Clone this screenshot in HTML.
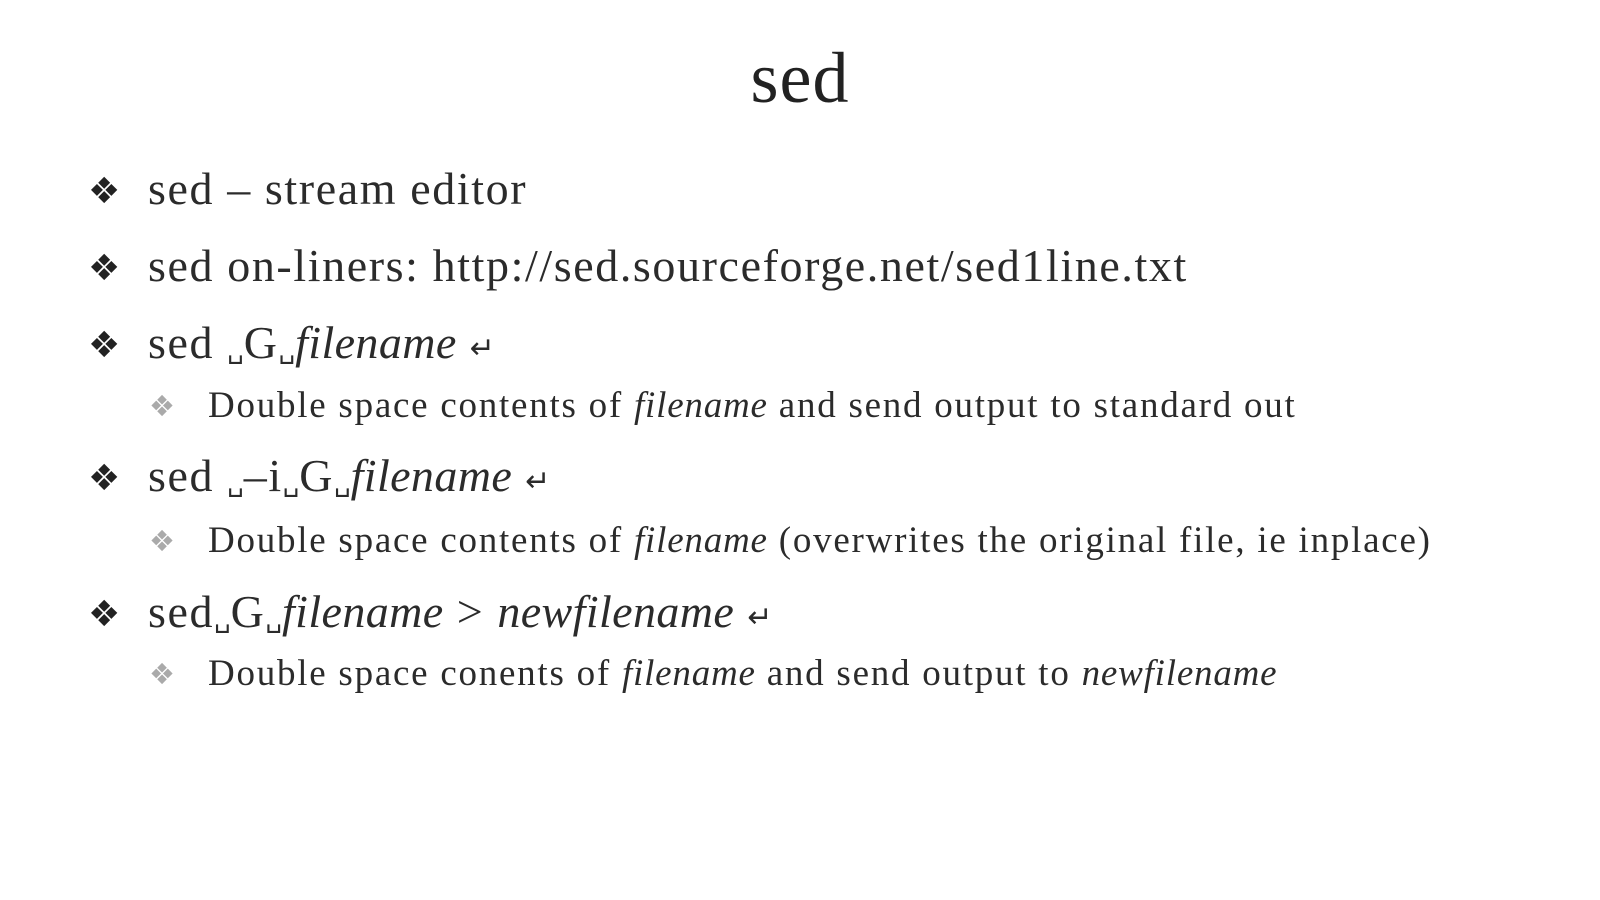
<!DOCTYPE html>
<html><head><meta charset="utf-8"><style>
html,body{margin:0;padding:0;width:1600px;height:900px;background:#fff;overflow:hidden}
body{font-family:"Liberation Serif",serif;color:#2b2b2b;position:relative}
.t{position:absolute;white-space:nowrap;line-height:1}
.title{font-size:72px;left:0;width:1600px;text-align:center;top:42px;color:#222;letter-spacing:1px}
.m{font-size:46px;left:148px;letter-spacing:1.6px}
.m i{letter-spacing:0.4px}
.s{font-size:37px;left:208px;letter-spacing:1.75px}
.s i{letter-spacing:0.8px}
.b{position:absolute;font-family:"DejaVu Sans",sans-serif;line-height:1}
.mb{font-size:36px;left:88px;color:#222}
.sb{font-size:29px;left:149px;color:#aaa}
.sp{font-family:"DejaVu Sans",sans-serif;font-size:26px;letter-spacing:0}
.ar{font-family:"DejaVu Sans",sans-serif;font-size:30px}
i{font-style:italic}
</style></head><body>
<div class="t title">sed</div>

<div class="b mb" style="top:174px">❖</div>
<div class="t m" style="top:166px">sed – stream editor</div>

<div class="b mb" style="top:251px">❖</div>
<div class="t m" style="top:243px">sed on-liners: http://sed.sourceforge.net/sed1line.txt</div>

<div class="b mb" style="top:328px">❖</div>
<div class="t m" style="top:320px">sed <span class="sp">␣</span>G<span class="sp">␣</span><i>filename</i> <span class="ar">↵</span></div>

<div class="b sb" style="top:392px">❖</div>
<div class="t s" style="top:387px">Double space contents of <i>filename</i> and send output to standard out</div>

<div class="b mb" style="top:461px">❖</div>
<div class="t m" style="top:453px">sed <span class="sp">␣</span>–i<span class="sp">␣</span>G<span class="sp">␣</span><i>filename</i> <span class="ar">↵</span></div>

<div class="b sb" style="top:527px">❖</div>
<div class="t s" style="top:522px">Double space contents of <i>filename</i> (overwrites the original file, ie inplace)</div>

<div class="b mb" style="top:597px">❖</div>
<div class="t m" style="top:589px">sed<span class="sp">␣</span>G<span class="sp">␣</span><i>filename</i> &gt; <i>newfilename</i> <span class="ar">↵</span></div>

<div class="b sb" style="top:660px">❖</div>
<div class="t s" style="top:655px">Double space conents of <i>filename</i> and send output to <i>newfilename</i></div>
</body></html>
